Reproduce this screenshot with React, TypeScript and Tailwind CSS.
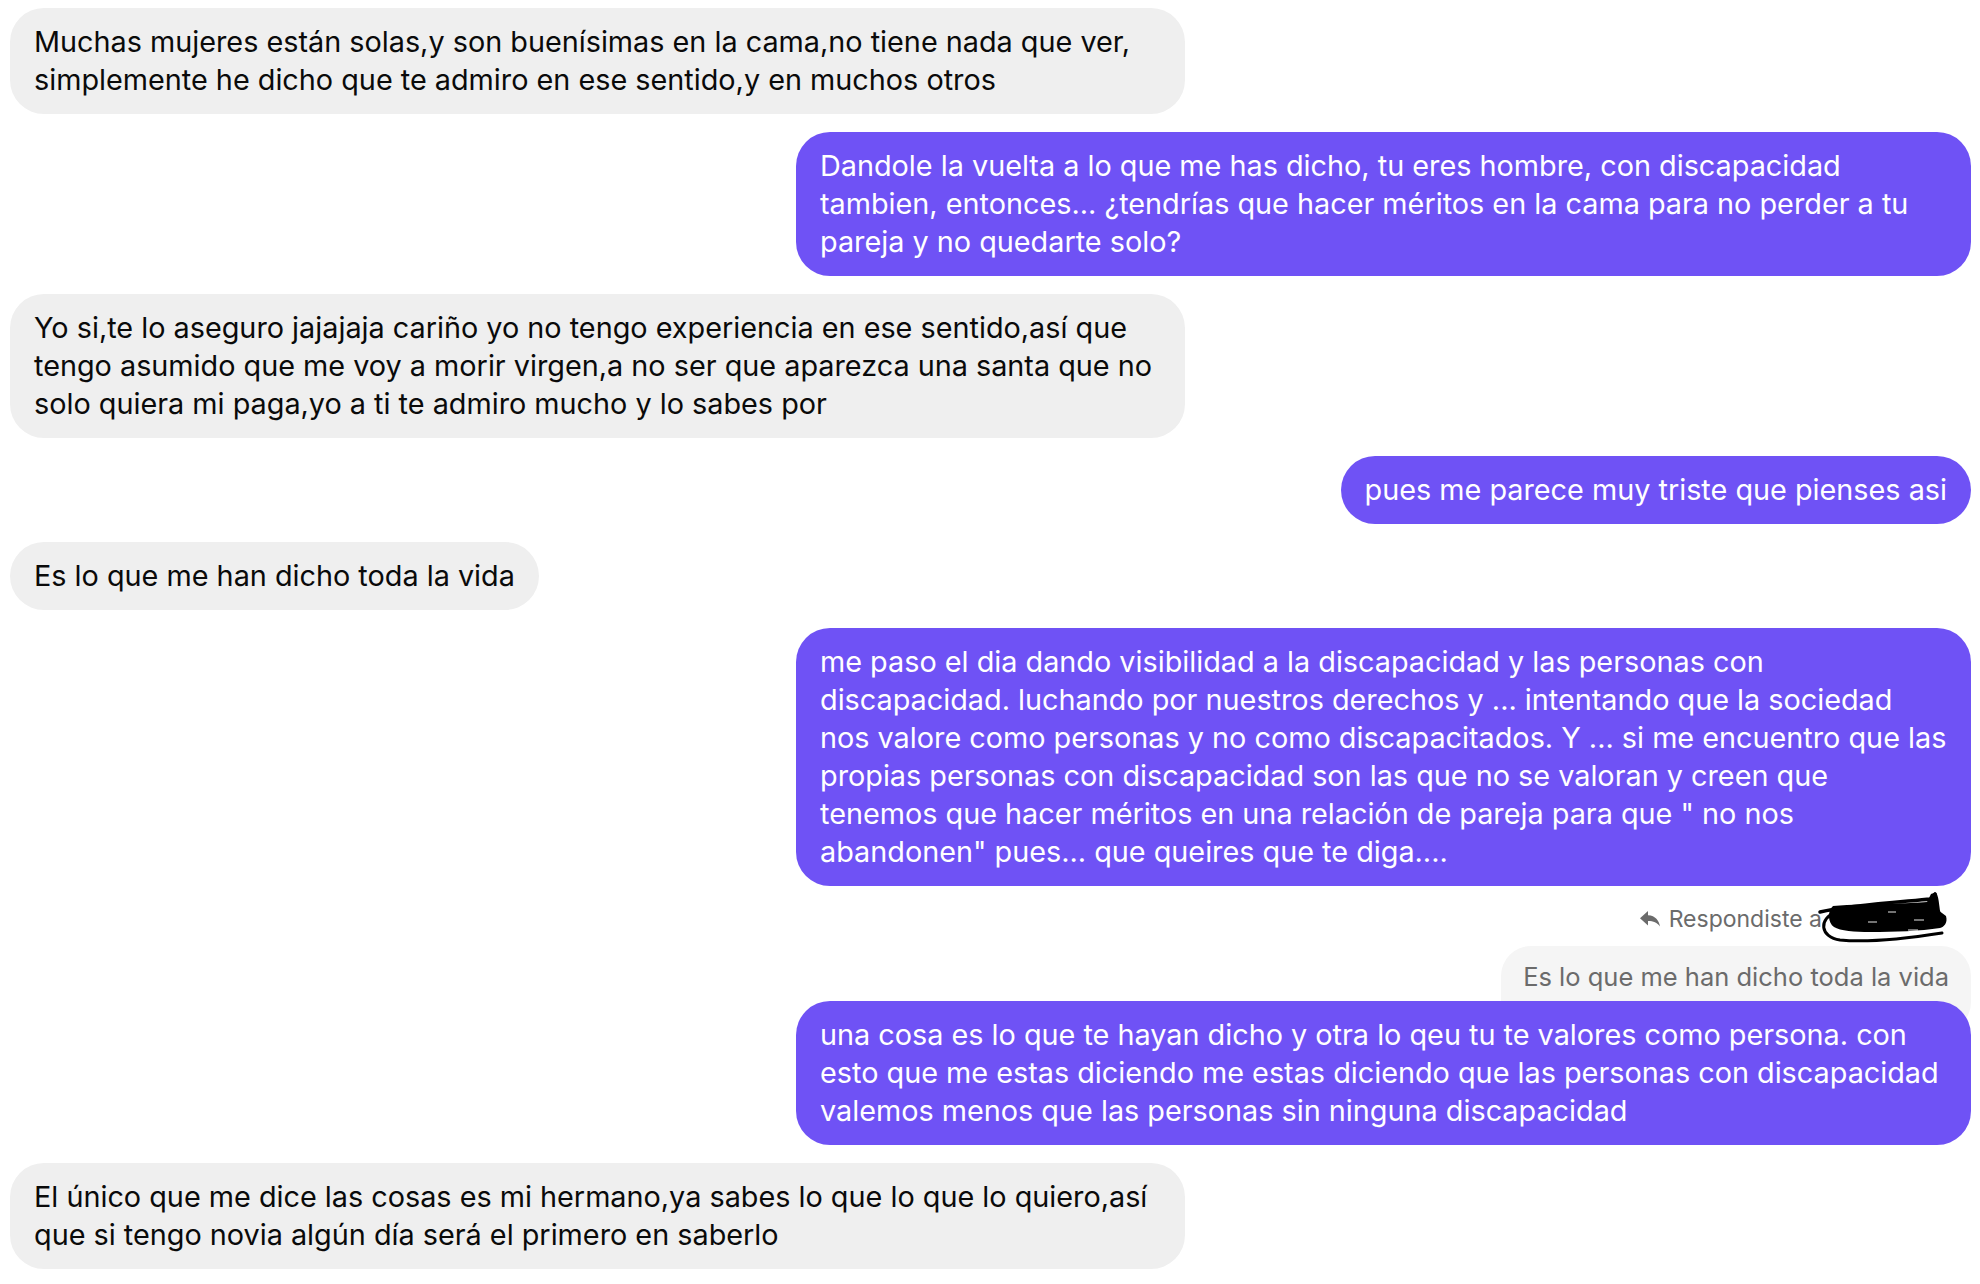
const font = "font-['Inter','Liberation_Sans',sans-serif]"

type Msg = { from: "me" | "them"; lines: string[] }

const before: Msg[] = [
  {
    from: "them",
    lines: [
      "Muchas mujeres están solas,y son buenísimas en la cama,no tiene nada que ver,",
      "simplemente he dicho que te admiro en ese sentido,y en muchos otros",
    ],
  },
  {
    from: "me",
    lines: [
      "Dandole la vuelta a lo que me has dicho, tu eres hombre, con discapacidad",
      "tambien, entonces... ¿tendrías que hacer méritos en la cama para no perder a tu",
      "pareja y no quedarte solo?",
    ],
  },
  {
    from: "them",
    lines: [
      "Yo si,te lo aseguro jajajaja cariño yo no tengo experiencia en ese sentido,así que",
      "tengo asumido que me voy a morir virgen,a no ser que aparezca una santa que no",
      "solo quiera mi paga,yo a ti te admiro mucho y lo sabes por",
    ],
  },
  { from: "me", lines: ["pues me parece muy triste que pienses asi"] },
  { from: "them", lines: ["Es lo que me han dicho toda la vida"] },
  {
    from: "me",
    lines: [
      "me paso el dia dando visibilidad a la discapacidad y las personas con",
      "discapacidad. luchando por nuestros derechos y ... intentando que la sociedad",
      "nos valore como personas y no como discapacitados. Y ... si me encuentro que las",
      "propias personas con discapacidad son las que no se valoran y creen que",
      "tenemos que hacer méritos en una relación de pareja para que \" no nos",
      "abandonen\" pues... que queires que te diga....",
    ],
  },
]

const replyMsg: Msg = {
  from: "me",
  lines: [
    "una cosa es lo que te hayan dicho y otra lo qeu tu te valores como persona. con",
    "esto que me estas diciendo me estas diciendo que las personas con discapacidad",
    "valemos menos que las personas sin ninguna discapacidad",
  ],
}

const lastMsg: Msg = {
  from: "them",
  lines: [
    "El único que me dice las cosas es mi hermano,ya sabes lo que lo que lo quiero,así",
    "que si tengo novia algún día será el primero en saberlo",
  ],
}

const Bubble = ({ msg, className = "" }: { msg: Msg; className?: string }) => {
  const multi = msg.lines.length > 1
  const tone = msg.from === "me" ? "bg-[#6f52f5] text-white self-end" : "bg-[#efefef] text-[#0a0a0a] self-start"
  return (
    <div
      className={`relative rounded-[34px] px-[24px] py-[15px] text-[28.8px] leading-[38px] ${tone} ${multi ? "w-[1175px]" : ""} ${className}`}
    >
      {msg.lines.map((l, i) => (
        <div key={i} className="whitespace-nowrap">
          {l}
        </div>
      ))}
    </div>
  )
}

const ReplyIcon = () => (
  <svg width="22" height="18" viewBox="0 0 22 18" className="fill-[#6b6b6b]">
    <path d="M9 1 L1 8.2 L9 15.5 V11 C14.5 11 18 12.5 21 16.5 C20 10.5 16.5 5.6 9 5.2 Z" />
  </svg>
)

// the name is scribbled out in the screenshot
const Scribble = () => (
  <svg width="135" height="58" viewBox="15 0 135 58" className="-ml-[7px] -my-[14px]">
    <path
      d="M33 16 C70 13 110 14 127 12 L131 4 C136 1 139 6 138 20 L146 26 C148 33 144 37 140 38 C120 41 95 42 70 42 C55 42 40 41 34 37 C28 33 27 21 33 16 Z"
      fill="#000"
    />
    <path d="M20 22 C50 15 100 12 131 9 L135 4" fill="none" stroke="#000" strokeWidth="3.5" strokeLinecap="round" />
    <path d="M135 4 C138 10 137 18 139 24" fill="none" stroke="#000" strokeWidth="3.5" strokeLinecap="round" />
    <path
      d="M36 22 C18 29 20 47 40 50 C70 53 110 48 142 43"
      fill="none"
      stroke="#000"
      strokeWidth="3"
      strokeLinecap="round"
    />
    <path d="M68 32 H77 M114 30 H124 M108 40 H118 M88 22 H96" stroke="#fff" strokeWidth="1.5" opacity="0.6" />
  </svg>
)

export default function App() {
  return (
    <div className={`min-h-[1284px] w-[1980px] bg-white pl-[10px] pr-[9px] pt-[8px] flex flex-col gap-[18px] ${font}`}>
      {before.map((m, i) => (
        <Bubble key={i} msg={m} />
      ))}

      <div className="flex flex-col items-end">
        <div className="flex items-center h-[30px] pr-[21px] text-[23px] text-[#6b6b6b]">
          <ReplyIcon />
          <span className="ml-[8px]">Respondiste a</span>
          <Scribble />
        </div>
        <div className="mt-[12px] rounded-[30px] bg-[#f5f5f5] px-[22px] pt-[16px] pb-[40px] text-[25.5px] leading-[30px] text-[#6b6b6b]">
          Es lo que me han dicho toda la vida
        </div>
        <Bubble msg={replyMsg} className="-mt-[31px]" />
      </div>

      <Bubble msg={lastMsg} />
    </div>
  )
}
